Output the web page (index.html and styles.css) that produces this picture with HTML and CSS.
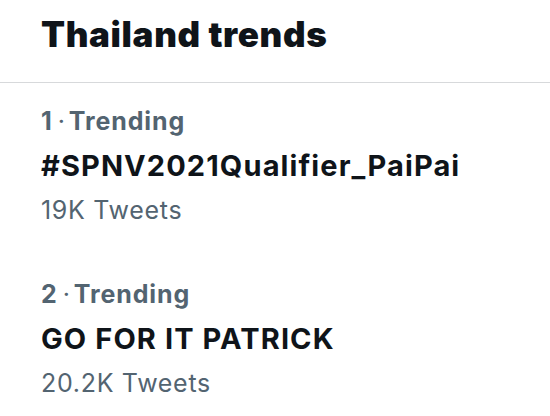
FILE: index.html
```html
<!DOCTYPE html>
<html lang="en">
<head>
<meta charset="utf-8">
<title>Thailand trends</title>
<link rel="stylesheet" href="styles.css">
</head>
<body>
  <header class="header">
    <h1 class="title">Thailand trends</h1>
  </header>
  <ul class="trends">
    <li class="trend">
      <div class="meta">1<span class="dot">·</span>Trending</div>
      <div class="topic">#SPNV2021Qualifier_PaiPai</div>
      <div class="count">19K Tweets</div>
    </li>
    <li class="trend">
      <div class="meta">2<span class="dot">·</span>Trending</div>
      <div class="topic">GO FOR IT PATRICK</div>
      <div class="count">20.2K Tweets</div>
    </li>
  </ul>
</body>
</html>
```

FILE: styles.css
```css
* { box-sizing: border-box; }
html, body {
  margin: 0;
  padding: 0;
  background: #ffffff;
}
body {
  width: 550px;
  height: 416px;
  overflow: hidden;
  font-family: Inter, "Liberation Sans", sans-serif;
  color: #0f1419;
}
.header {
  height: 83px;
  padding: 14px 41px 0;
  border-bottom: 1px solid #d7d9db;
}
.title {
  margin: 0;
  font-size: 35px;
  line-height: 40px;
  font-weight: 900;
  letter-spacing: 0.65px;
  color: #0f1419;
}
.trends {
  list-style: none;
  margin: 0;
  padding: 24px 41px 0;
  display: flex;
  flex-direction: column;
  gap: 56px;
}
.trend {
  display: flex;
  flex-direction: column;
}
.meta {
  font-size: 25px;
  line-height: 28px;
  font-weight: 700;
  letter-spacing: 0.9px;
  color: #536471;
}
.dot {
  margin: 0 3px 0 5px;
  font-weight: 400;
}
.topic {
  margin-top: 14px;
  font-size: 29px;
  line-height: 34px;
  font-weight: 700;
  letter-spacing: 1.1px;
  color: #0f1419;
}
.count {
  margin-top: 13px;
  font-size: 25px;
  line-height: 28px;
  font-weight: 400;
  letter-spacing: 0.7px;
  color: #536471;
}
```
